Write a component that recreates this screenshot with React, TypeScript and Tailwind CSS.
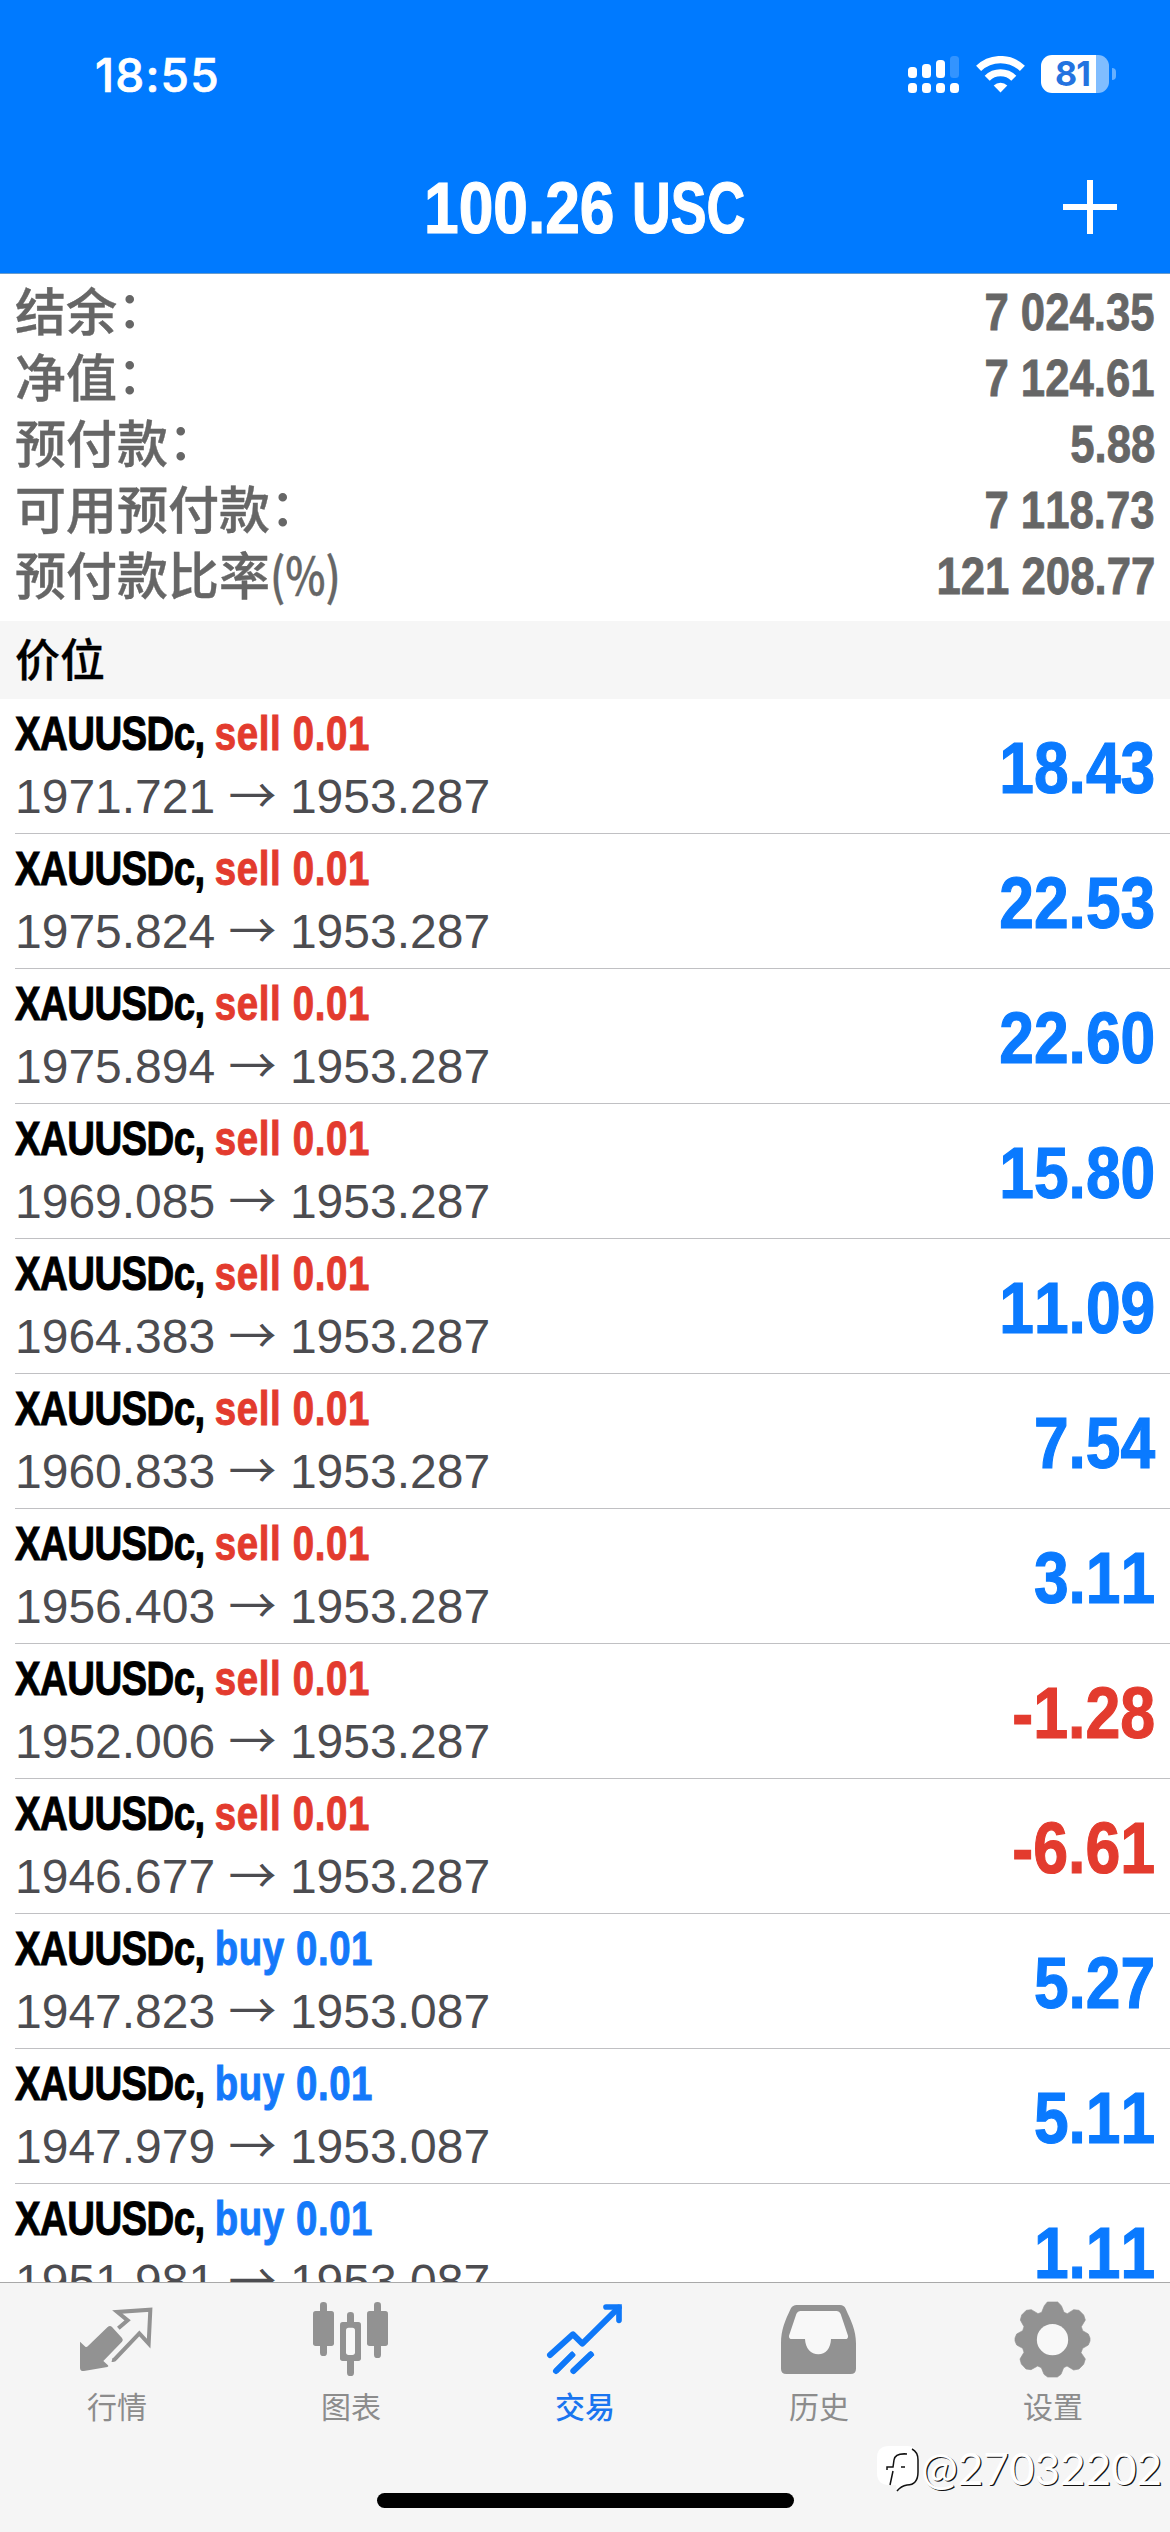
import { ReactNode } from "react";

interface Position {
  type: "sell" | "buy";
  open: string;
  current: string;
  profit: string;
}

const summary = [
  { label: "结余", suffix: "：", value: "7 024.35" },
  { label: "净值", suffix: "：", value: "7 124.61" },
  { label: "预付款", suffix: "：", value: "5.88" },
  { label: "可用预付款", suffix: "：", value: "7 118.73" },
  { label: "预付款比率", suffix: "(%)", value: "121 208.77" },
];

const positions: Position[] = [
  { type: "sell", open: "1971.721", current: "1953.287", profit: "18.43" },
  { type: "sell", open: "1975.824", current: "1953.287", profit: "22.53" },
  { type: "sell", open: "1975.894", current: "1953.287", profit: "22.60" },
  { type: "sell", open: "1969.085", current: "1953.287", profit: "15.80" },
  { type: "sell", open: "1964.383", current: "1953.287", profit: "11.09" },
  { type: "sell", open: "1960.833", current: "1953.287", profit: "7.54" },
  { type: "sell", open: "1956.403", current: "1953.287", profit: "3.11" },
  { type: "sell", open: "1952.006", current: "1953.287", profit: "-1.28" },
  { type: "sell", open: "1946.677", current: "1953.287", profit: "-6.61" },
  { type: "buy", open: "1947.823", current: "1953.087", profit: "5.27" },
  { type: "buy", open: "1947.979", current: "1953.087", profit: "5.11" },
  { type: "buy", open: "1951.981", current: "1953.087", profit: "1.11" },
];

const SignalIcon = () => (
  <svg width="52" height="38" viewBox="0 0 52 38" fill="#fff">
    <rect x="0" y="12" width="9" height="11" rx="3.5" />
    <rect x="14" y="9" width="9" height="14" rx="3.5" />
    <rect x="28" y="5" width="9" height="18" rx="3.5" />
    <rect x="42" y="1" width="9" height="22" rx="3.5" opacity="0.2" />
    <rect x="0" y="28" width="9" height="10" rx="3.5" />
    <rect x="14" y="28" width="9" height="10" rx="3.5" />
    <rect x="28" y="28" width="9" height="10" rx="3.5" />
    <rect x="42" y="28" width="9" height="10" rx="3.5" />
  </svg>
);

const WifiIcon = () => (
  <svg width="49" height="37" viewBox="0 0 49 37" fill="none" stroke="#fff" strokeWidth="7.2">
    <path d="M2.6 12.4a31.5 31.5 0 0 1 43.8 0" />
    <path d="M11.2 22.2a19 19 0 0 1 26.6 0" />
    <path d="M24.5 36.5l-6.8-7a9.8 9.8 0 0 1 13.6 0z" fill="#fff" stroke="none" />
  </svg>
);

const QuotesIcon = () => (
  <svg className="size-[78px]" viewBox="54 30 234 234" fill="#929292">
    <path d="M60 155l16 15q4 2 8-2l59-57q7-6 13 0l30 33q5 6 0 11l-56 58 14 13q3 3-2 5l-70 12q-12 1-12-10z" />
    <path
      d="M175 115l28-24-31-25 99-7-5 102-28-31-75 79q-3 2-7 1"
      fill="none"
      stroke="#929292"
      strokeWidth="12"
    />
  </svg>
);

const ChartIcon = () => (
  <svg className="size-[78px]" viewBox="756 30 234 234" fill="#929292">
    <rect x="780" y="36" width="21" height="162" rx="10" />
    <rect x="759" y="63" width="63" height="105" rx="8" />
    <rect x="861" y="66" width="21" height="192" rx="10" />
    <rect x="840" y="96" width="63" height="117" rx="8" />
    <rect x="858" y="113" width="27" height="82" rx="8" fill="#f8f8f8" />
    <rect x="942" y="36" width="21" height="168" rx="10" />
    <rect x="921" y="63" width="63" height="105" rx="8" />
  </svg>
);

const TradeIcon = () => (
  <svg
    className="size-[78px]"
    viewBox="48 30 234 234"
    fill="none"
    stroke="#0f78f8"
    strokeWidth="18"
    strokeLinecap="round"
  >
    <path d="M60 195l69-62 28 28L266 53" strokeLinejoin="round" />
    <path d="M228 51h39v40" strokeWidth="17" />
    <path d="M78 243l54-54M130 243l58-54" strokeLinecap="butt" strokeWidth="16" />
    <path d="M78 243l48-48M130 243l52-50" />
  </svg>
);

const HistoryIcon = () => (
  <svg className="size-[78px]" viewBox="750 30 234 234">
    <path
      d="M800 45h130q12 0 17 11c16 36 31 64 31 104v76q0 16-16 16H769q-16 0-16-16v-76c0-40 12-68 29-104q6-11 18-11z"
      fill="#929292"
    />
    <path
      d="M812 63h107q9 0 13 9l22 65q1 10-8 10h-43c-1 28-16 46-38 46s-39-18-40-46h-39q-10 0-9-10l22-65q4-9 13-9z"
      fill="#f8f8f8"
    />
  </svg>
);

const SettingsIcon = () => (
  <svg className="size-[78px]" viewBox="42 30 234 234">
    <path
      d="M142 36h31l11 11 8 20 10 4 19-12 16 2 14 14 5 15-12 20 4 12 17 10 5 12v9l-5 12-17 10-5 13 13 19-5 16-14 14-16 3-20-12-10 5-8 20-11 8h-29l-11-8-8-20-11-5-20 11-15-2-14-15-4-15 12-20-4-12-18-10-5-12v-9l5-12 18-10 4-12-11-20 4-15 14-14 15-2 20 12 11-4 8-20z"
      fill="#929292"
      stroke="#929292"
      strokeWidth="2"
      strokeLinejoin="round"
    />
    <circle cx="157.5" cy="149" r="47" fill="#f8f8f8" />
  </svg>
);

const Tab = ({ label, icon, active }: { label: string; icon: ReactNode; active?: boolean }) => (
  <div className="flex flex-1 flex-col items-center">
    {icon}
    <span
      className={
        active
          ? "mt-[5px] text-[30px] leading-[44px] font-medium text-[#1a75f0]"
          : "mt-[5px] text-[30px] leading-[44px] text-[#8c8c8c]"
      }
    >
      {label}
    </span>
  </div>
);

const PositionRow = ({ type, open, current, profit }: Position) => (
  <div className="ml-[15px] flex h-[135px] shrink-0 items-center justify-between border-b border-[#c0c0c3] pr-[15px] font-['Liberation_Sans',sans-serif] [font-kerning:none]">
    <div className="h-full pt-[7px] whitespace-nowrap">
      <div className="origin-left scale-x-80 text-[48px] leading-[56px] font-bold text-black [-webkit-text-stroke:1px]">
        <span className="tracking-[-0.7px]">XAUUSDc, </span>
        <span
          className={
            type === "sell" ? "tracking-[0.8px] text-[#e33b2e]" : "tracking-[0.7px] text-[#1479fa]"
          }
        >
          {type} 0.01
        </span>
      </div>
      <div className="mt-[7px] text-[48px] leading-[56px] text-[#4c4c50]">
        {open} <span className="font-['Noto_Sans_CJK_SC',sans-serif] leading-[0]">→</span> {current}
      </div>
    </div>
    <div
      className={
        profit.startsWith("-")
          ? "mt-[4px] origin-right scale-x-[0.87] text-[72px] leading-none font-bold text-[#e33b2e] [-webkit-text-stroke:1.2px]"
          : "mt-[4px] origin-right scale-x-[0.865] text-[72px] leading-none font-bold text-[#0a7aff] [-webkit-text-stroke:1.2px]"
      }
    >
      {profit}
    </div>
  </div>
);

export default function App() {
  return (
    <div className="relative flex h-[2532px] w-[1170px] flex-col overflow-hidden bg-white font-['Noto_Sans_CJK_SC',sans-serif]">
      <header className="flex h-[274px] shrink-0 flex-col border-b border-[#6a9ccb] bg-[#007aff] text-white">
        <div className="flex h-[148px] items-center justify-between pr-[54px] pl-[95px]">
          <span className="pt-[2px] font-['Inter',sans-serif] text-[46px] font-medium tracking-[1.2px] [-webkit-text-stroke:0.7px]">
            18:55
          </span>
          <div className="flex items-center">
            <SignalIcon />
            <div className="ml-[16px]">
              <WifiIcon />
            </div>
            <div className="ml-[16px] flex h-[38px] w-[68px] items-center rounded-[11px] bg-[linear-gradient(to_right,#fff_55px,#80bdff_55px)] pl-[14px]">
              <span className="font-['Inter',sans-serif] text-[34px] leading-none font-bold tracking-[-1px] text-[#2373e0]">
                81
              </span>
            </div>
            <div className="ml-[3px] h-[12px] w-[4px] rounded-r-full bg-[#66b0ff]" />
          </div>
        </div>
        <div className="flex h-[117px] items-center font-['Liberation_Sans',sans-serif] text-[72px] leading-none font-bold [font-kerning:none] [-webkit-text-stroke:1.2px]">
          <div className="flex flex-1 justify-center pt-[2px] pl-[106px]">
            <div className="w-[208px]">
              <span className="inline-block origin-left scale-x-[0.865]">100.26</span>
            </div>
            <div className="w-[113px]">
              <span className="inline-block origin-left scale-x-[0.745]">USC</span>
            </div>
          </div>
          <svg className="mr-[52px]" width="56" height="56" viewBox="0 0 56 56" stroke="#fff" strokeWidth="6">
            <path d="M1 28h54M28 1v54" />
          </svg>
        </div>
      </header>

      <section className="flex h-[347px] shrink-0 flex-col pt-[2px] text-[51px] leading-[66px] text-[#666]">
        {summary.map((item) => (
          <div key={item.label} className="flex h-[66px] justify-between px-[15px]">
            <div className="flex font-medium [-webkit-text-stroke:0.4px]">
              <span>{item.label}</span>
              {item.suffix === "(%)" ? (
                <span className="origin-left scale-x-[0.84]">{item.suffix}</span>
              ) : (
                <span className="-mt-[3px] [-webkit-text-stroke:0]">{item.suffix}</span>
              )}
            </div>
            <span className="origin-right scale-x-[0.857] pt-[4px] font-['Liberation_Sans',sans-serif] font-bold [font-kerning:none] [-webkit-text-stroke:0.8px]">
              {item.value}
            </span>
          </div>
        ))}
      </section>

      <div className="flex h-[78px] shrink-0 items-center bg-[#f6f6f6] pb-[4px] pl-[15px] text-[45px] font-medium text-black [-webkit-text-stroke:0.3px]">
        价位
      </div>

      <main className="flex min-h-0 flex-1 flex-col overflow-hidden">
        {positions.map((p) => (
          <PositionRow key={p.open} {...p} />
        ))}
      </main>

      <nav className="flex h-[250px] shrink-0 flex-col border-t border-[#a9a9a9] bg-[#f5f5f5] pt-[17px]">
        <div className="flex">
          <Tab label="行情" icon={<QuotesIcon />} />
          <Tab label="图表" icon={<ChartIcon />} />
          <Tab label="交易" icon={<TradeIcon />} active />
          <Tab label="历史" icon={<HistoryIcon />} />
          <Tab label="设置" icon={<SettingsIcon />} />
        </div>
        <div className="mx-auto mt-[66px] h-[15px] w-[417px] rounded-full bg-black" />
      </nav>

      {/* user tag over the tab bar */}
      <div className="absolute right-[8px] bottom-[39px] flex items-center font-['Lato',sans-serif] text-[44px] leading-[50px] text-white [text-shadow:1.2px_0.8px_0_#111]">
        <svg width="44" height="46" viewBox="0 0 44 46" className="mt-[2px]">
          <path
            d="M12 0h18q11 0 11 12v14q0 13-11 13-6 1-10 6l-1-6h-7Q0 39 0 27V12Q0 0 12 0z"
            fill="#fff"
          />
          <path
            d="M35 3q6 3 6 11v12q0 13-11 13-6 1-10 6M30 8q-12-1-13 6l-1 7H10v3M24 21h4M16 25l-3 14"
            fill="none"
            stroke="#111"
            strokeWidth="1.5"
          />
        </svg>
        <span>@27032202</span>
      </div>
    </div>
  );
}
